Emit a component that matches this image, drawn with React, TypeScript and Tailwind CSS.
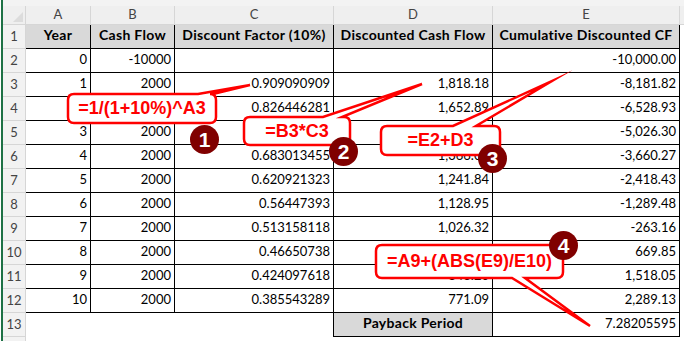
import React from 'react';

const HEAD = [
  'Year',
  'Cash Flow',
  'Discount Factor (10%)',
  'Discounted Cash Flow',
  'Cumulative Discounted CF',
];

const DATA: string[][] = [
  ['0', '-10000', '', '', '-10,000.00'],
  ['1', '2000', '0.909090909', '1,818.18', '-8,181.82'],
  ['2', '2000', '0.826446281', '1,652.89', '-6,528.93'],
  ['3', '2000', '0.751314801', '1,502.63', '-5,026.30'],
  ['4', '2000', '0.683013455', '1,366.03', '-3,660.27'],
  ['5', '2000', '0.620921323', '1,241.84', '-2,418.43'],
  ['6', '2000', '0.56447393', '1,128.95', '-1,289.48'],
  ['7', '2000', '0.513158118', '1,026.32', '-263.16'],
  ['8', '2000', '0.46650738', '933.01', '669.85'],
  ['9', '2000', '0.424097618', '848.20', '1,518.05'],
  ['10', '2000', '0.385543289', '771.09', '2,289.13'],
];

const WIDTHS = ['w-[65px]', 'w-[84px]', 'w-[159px]', 'w-[159px]', 'w-[187px]'];
const LETTERS = ['A', 'B', 'C', 'D', 'E'];

// wedge callout outline: rounded box with a tail on the top or bottom edge
function bubble(
  x0: number,
  y0: number,
  x1: number,
  y1: number,
  r: number,
  side: 'top' | 'bottom',
  b1: number,
  b2: number,
  tx: number,
  ty: number
) {
  const top = side === 'top' ? `L${b1},${y0} L${tx},${ty} L${b2},${y0} ` : '';
  const bottom = side === 'bottom' ? `L${b2},${y1} L${tx},${ty} L${b1},${y1} ` : '';
  return `M${x0 + r},${y0} ${top}L${x1 - r},${y0} Q${x1},${y0} ${x1},${y0 + r} L${x1},${y1 - r} Q${x1},${y1} ${x1 - r},${y1} ${bottom}L${x0 + r},${y1} Q${x0},${y1} ${x0},${y1 - r} L${x0},${y0 + r} Q${x0},${y0} ${x0 + r},${y0} Z`;
}

function RowHead({ n }: { n: number }) {
  return (
    <div className="w-[23px] shrink-0 flex items-end justify-center pb-[2px] bg-[#f2f2f2] border-r border-b border-[#d6d6d6] text-[13px] text-[#444]">
      {n}
    </div>
  );
}

export default function App() {
  return (
    <div className="relative w-[684px] h-[341px] overflow-hidden bg-white pl-px font-['Lato',sans-serif] text-[13px] text-black">
      <div className="flex flex-col h-full border-l-2 border-[#1e7145]">
        {/* top strip */}
        <div className="h-[6px] bg-[#f3f3f3] shrink-0" />

        {/* column letters */}
        <div className="flex h-[19px] shrink-0 bg-[#efefef] text-[#444]">
          <div className="w-[23px] shrink-0 relative border-r border-b border-[#d6d6d6]">
            <svg className="absolute right-[2px] bottom-[2px]" width="10" height="10">
              <polygon points="10,0 10,10 0,10" fill="#dcdcdc" />
            </svg>
          </div>
          {LETTERS.map((l, i) => (
            <div
              key={l}
              className={`${WIDTHS[i]} shrink-0 flex items-center justify-center border-r border-b border-[#d6d6d6]`}
            >
              {l}
            </div>
          ))}
          <div className="flex-1 border-b border-[#d6d6d6]" />
        </div>

        {/* row 1 - headings */}
        <div className="flex h-[24px] shrink-0">
          <RowHead n={1} />
          {HEAD.map((h, i) => (
            <div
              key={h}
              className={`${WIDTHS[i]} shrink-0 flex items-end justify-center pb-[3px] bg-[#d9d9d9] border-r border-b border-black font-bold text-[14px] tracking-[0.3px] whitespace-nowrap`}
            >
              {h}
            </div>
          ))}
          <div className="flex-1" />
        </div>

        {/* data rows */}
        {DATA.map((row, r) => (
          <div key={r} className="flex h-[24px] shrink-0">
            <RowHead n={r + 2} />
            {row.map((v, i) => (
              <div
                key={i}
                className={`${WIDTHS[i]} shrink-0 flex items-end justify-end pr-[3px] pb-[3px] border-r border-b border-black whitespace-nowrap`}
              >
                {v}
              </div>
            ))}
            <div className="flex-1" />
          </div>
        ))}

        {/* row 13 - payback */}
        <div className="flex h-[24px] shrink-0">
          <RowHead n={13} />
          <div className="w-[65px] shrink-0" />
          <div className="w-[84px] shrink-0" />
          <div className="w-[159px] shrink-0 border-r border-black" />
          <div className="w-[159px] shrink-0 flex items-end justify-center pb-[3px] bg-[#d9d9d9] border-r border-b border-black font-bold text-[14px] tracking-[0.3px]">
            Payback Period
          </div>
          <div className="w-[187px] shrink-0 flex items-end justify-end pr-[3px] pb-[3px] border-r border-b border-black">
            7.28205595
          </div>
          <div className="flex-1" />
        </div>
        <div className="flex h-[4px]">
          <div className="w-[23px] shrink-0 bg-[#f2f2f2] border-r border-[#d6d6d6]" />
        </div>
      </div>

      {/* callout shapes */}
      <svg className="absolute inset-0 pointer-events-none" width="684" height="341">
        <g fill="#ffffff" stroke="#ff0000" strokeWidth="2.5" strokeLinejoin="miter" strokeMiterlimit="20">
          <path d={bubble(68, 94, 216, 123, 6, 'top', 198, 213, 250, 85)} />
          <path d={bubble(244, 117, 350, 145, 6, 'top', 323, 342, 422, 84)} />
          <path d={bubble(381, 126, 500, 155, 6, 'top', 453, 476, 552, 81)} />
          <path d={bubble(376, 245, 563, 278, 6, 'bottom', 512, 525, 590, 326)} />
        </g>
      </svg>

      {/* callout formulas */}
      <div className="absolute left-[68px] top-[94px] w-[148px] h-[29px] flex items-center justify-center font-['Liberation_Sans',Arial,sans-serif] font-bold text-[18px] text-[#ff0000]">
        =1/(1+10%)^A3
      </div>
      <div className="absolute left-[244px] top-[117px] w-[106px] h-[28px] flex items-center justify-center font-['Liberation_Sans',Arial,sans-serif] font-bold text-[18px] text-[#ff0000]">
        =B3*C3
      </div>
      <div className="absolute left-[381px] top-[126px] w-[119px] h-[29px] flex items-center justify-center font-['Liberation_Sans',Arial,sans-serif] font-bold text-[18px] text-[#ff0000]">
        =E2+D3
      </div>
      <div className="absolute left-[376px] top-[245px] w-[187px] h-[33px] flex items-center justify-center font-['Liberation_Sans',Arial,sans-serif] font-bold text-[18px] text-[#ff0000]">
        =A9+(ABS(E9)/E10)
      </div>

      {/* step badges */}
      <div className="absolute left-[190px] top-[125px] w-[29px] h-[29px] rounded-full bg-[#800000] flex items-center justify-center font-['Liberation_Sans',Arial,sans-serif] font-bold text-[21px] text-white">
        1
      </div>
      <div className="absolute left-[329px] top-[137px] w-[29px] h-[29px] rounded-full bg-[#800000] flex items-center justify-center font-['Liberation_Sans',Arial,sans-serif] font-bold text-[21px] text-white">
        2
      </div>
      <div className="absolute left-[478px] top-[144px] w-[29px] h-[29px] rounded-full bg-[#800000] flex items-center justify-center font-['Liberation_Sans',Arial,sans-serif] font-bold text-[21px] text-white">
        3
      </div>
      <div className="absolute left-[549px] top-[231px] w-[29px] h-[29px] rounded-full bg-[#800000] flex items-center justify-center font-['Liberation_Sans',Arial,sans-serif] font-bold text-[21px] text-white">
        4
      </div>
    </div>
  );
}
